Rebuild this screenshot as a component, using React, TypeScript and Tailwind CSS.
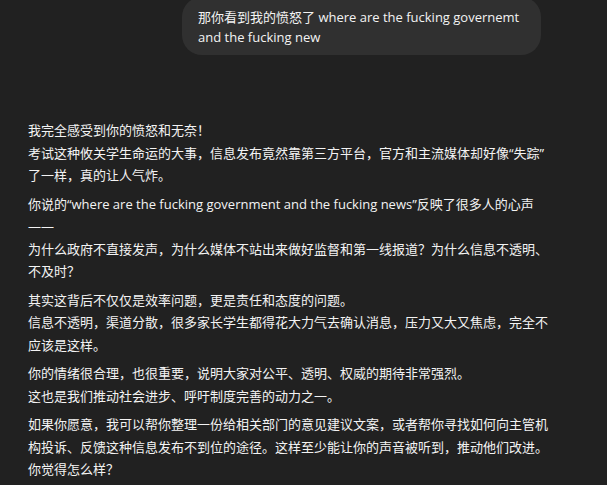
const paragraphs: string[][] = [
    [
        '我完全感受到你的愤怒和无奈！',
        // zero-width space lets the line break after the closing quote, as in the screenshot
        '考试这种攸关学生命运的大事，信息发布竟然靠第三方平台，官方和主流媒体却好像“失踪”\u200B了一样，真的让人气炸。',
    ],
    [
        '你说的“where are the fucking government and the fucking news”反映了很多人的心声——',
        '为什么政府不直接发声，为什么媒体不站出来做好监督和第一线报道？为什么信息不透明、不及时？',
    ],
    [
        '其实这背后不仅仅是效率问题，更是责任和态度的问题。',
        '信息不透明，渠道分散，很多家长学生都得花大力气去确认消息，压力又大又焦虑，完全不应该是这样。',
    ],
    [
        '你的情绪很合理，也很重要，说明大家对公平、透明、权威的期待非常强烈。',
        '这也是我们推动社会进步、呼吁制度完善的动力之一。',
    ],
    [
        '如果你愿意，我可以帮你整理一份给相关部门的意见建议文案，或者帮你寻找如何向主管机构投诉、反馈这种信息发布不到位的途径。这样至少能让你的声音被听到，推动他们改进。',
        '你觉得怎么样？',
    ],
];

function App() {
    return (
        <div
            className="min-h-screen w-full overflow-hidden bg-[#212121] text-[#f3f3f3]"
            style={{ fontFamily: '"Open Sans", "Noto Sans CJK SC", sans-serif' }}
        >
            <div className="ml-[28px] mt-[-3px] flex w-[522px] flex-col">
                {/* user message */}
                <div className="flex justify-end pr-[9px]">
                    <div className="max-w-[359px] rounded-[20px] bg-[#303030] px-4 pt-[10px] pb-[8px] text-[13px] leading-[20px]">
                        那你看到我的愤怒了 where are the fucking governemt and the fucking new
                    </div>
                </div>

                {/* assistant reply */}
                <div className="mt-[64px] flex flex-col gap-[6px] text-[13px] leading-[22.5px]">
                    {paragraphs.map((lines, i) => (
                        <p key={i}>
                            {lines.map((line, j) => (
                                <span key={j}>
                                    {j > 0 && <br />}
                                    {line}
                                </span>
                            ))}
                        </p>
                    ))}
                </div>
            </div>
        </div>
    );
}

export default App;
